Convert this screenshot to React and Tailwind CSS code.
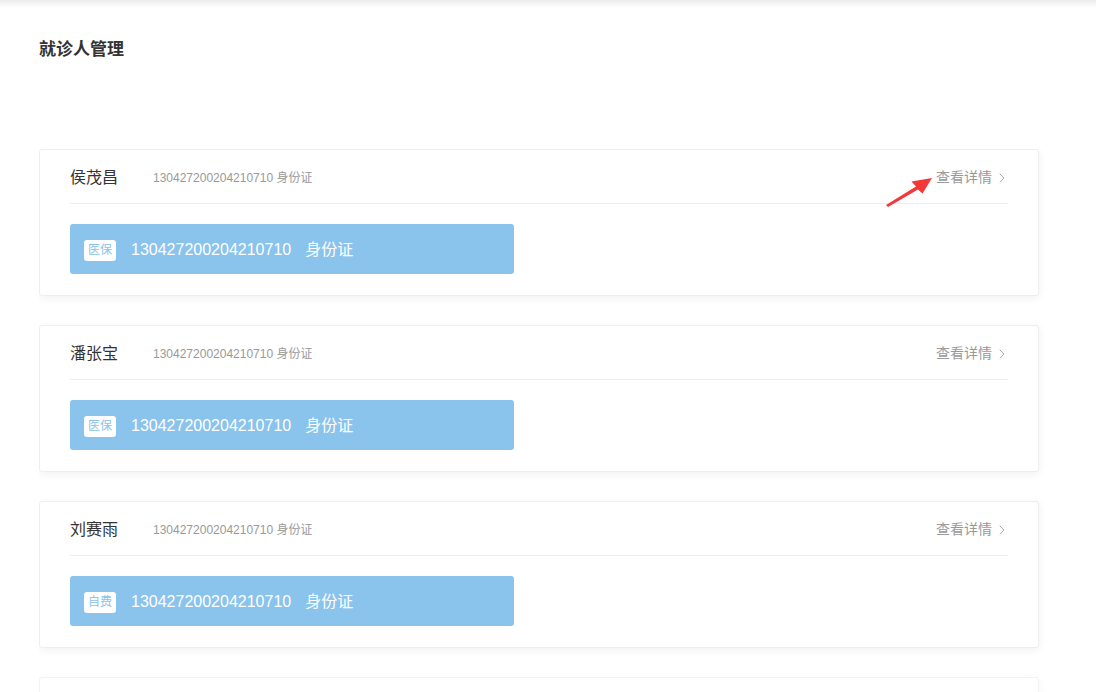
import { ChevronRight } from 'lucide-react'

const patients = [
  { name: '侯茂昌', idNo: '130427200204210710', type: '医保' },
  { name: '潘张宝', idNo: '130427200204210710', type: '医保' },
  { name: '刘赛雨', idNo: '130427200204210710', type: '自费' },
]

function PatientCard({ name, idNo, type, marked }) {
  return (
    <div className="relative w-[1000px] mb-[29px] bg-white border border-[#eeeeee] rounded-[3px] shadow-[0_2px_8px_rgba(0,0,0,0.06)] px-[30px]">
      <div className="flex items-center h-[54px] pt-[2px] border-b border-[#eeeef2]">
        <span className="w-[83px] text-[16px] text-[#333]">{name}</span>
        <span className="text-[12px] text-[#999]">{idNo} 身份证</span>
        <span className="ml-auto flex items-center text-[14px] text-[#999] mr-[-2px]">
          查看详情
          <ChevronRight className="w-[16px] h-[16px] ml-[2px] text-[#aaa]" strokeWidth={1.4} />
        </span>
      </div>
      <div className="flex items-center w-[444px] h-[50px] mt-[20px] mb-[21px] pt-[2px] bg-[#8ac3ec] rounded-[3px] pl-[14px] text-white">
        <span className="flex items-center justify-center w-[32px] h-[21px] bg-white rounded-[3px] text-[12px] text-[#8ac3ec]">
          {type}
        </span>
        <span className="ml-[15px] text-[16px]">{idNo}</span>
        <span className="ml-[14px] text-[16px]">身份证</span>
      </div>
      {marked && (
        <svg className="absolute left-[846px] top-[22px]" width="52" height="40" viewBox="0 0 52 40">
          <polygon points="0,33 30,14.5 25.5,9.5 46,6 36.5,21.5 32,17.5 2,35" fill="#f33838" />
        </svg>
      )}
    </div>
  )
}

export default function App() {
  return (
    <div className="min-h-[692px] bg-white" style={{ fontFamily: '"Liberation Sans", "Noto Sans CJK SC", sans-serif' }}>
      <div className="h-[8px] bg-gradient-to-b from-[#ececec] to-white" />
      <div className="pl-[39px]">
        <h1 className="pt-[31px] text-[17px] font-bold text-[#333] leading-[22px]">就诊人管理</h1>
        <div className="mt-[88px] h-[543px] overflow-hidden">
          {patients.map((p, i) => (
            <PatientCard key={i} {...p} marked={i === 0} />
          ))}
          <div className="w-[1000px] h-[147px] bg-white border border-[#f2f2f2] rounded-[3px] shadow-[0_2px_8px_rgba(0,0,0,0.04)]" />
        </div>
      </div>
    </div>
  )
}
